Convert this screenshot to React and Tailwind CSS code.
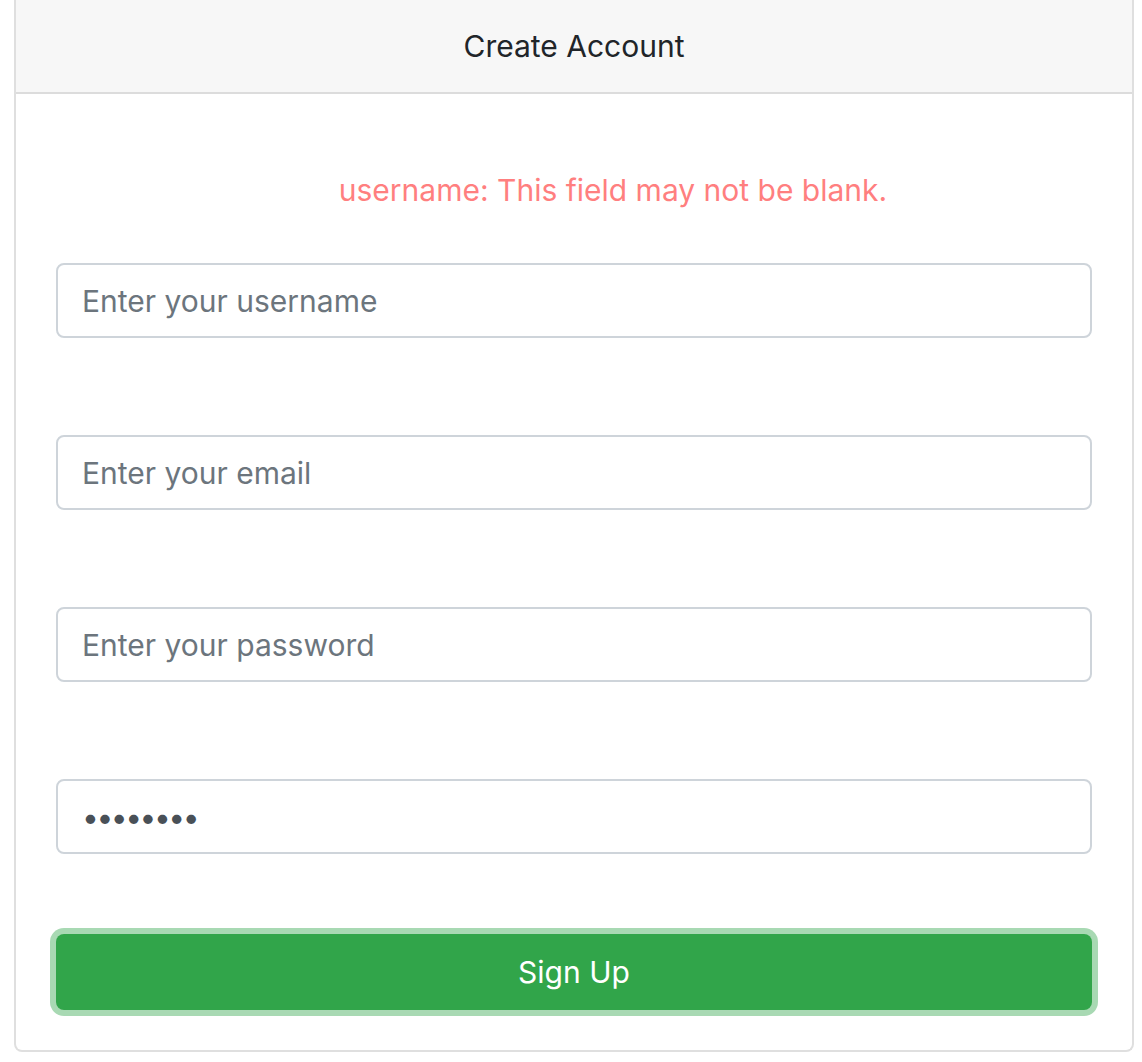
import React from "react";

export default function App() {
  const font = { fontFamily: "Inter, 'Noto Sans', 'Liberation Sans', sans-serif" };
  const inputCls =
    "block w-full h-[75px] border-2 border-[#ced4da] rounded-[8px] bg-white px-[24px] text-[30px] text-[#495057] placeholder:text-[#6c757d] outline-none";
  return (
    <div className="w-[1142px] h-[1062px] bg-white" style={font}>
      <div className="ml-[14px] w-[1120px] border-2 border-t-0 border-[#dfdfdf] rounded-b-[8px] bg-white">
        <div className="h-[94px] bg-[#f7f7f7] border-b-2 border-[#dcdcdc] flex items-center justify-center text-[30px] text-[#212529]">
          Create Account
        </div>
        <div className="px-[40px] pt-[40px] pb-[40px]">
          <div className="mt-[36px] pl-[78px] text-center text-[30px] leading-[40px] text-[#ff7f7f]">
            username: This field may not be blank.
          </div>
          <div className="mt-[53px] flex flex-col gap-[97px]">
            <input className={inputCls} placeholder="Enter your username" />
            <input className={inputCls} placeholder="Enter your email" />
            <input className={inputCls} placeholder="Enter your password" />
            <input className={inputCls + " tracking-[-2.5px]"} type="password" defaultValue="password" />
          </div>
          <button className="mt-[80px] block w-full h-[76px] rounded-[8px] bg-[#31a54a] text-white text-[30px] shadow-[0_0_0_6px_#a8d9b3]">
            Sign Up
          </button>
        </div>
      </div>
    </div>
  );
}
